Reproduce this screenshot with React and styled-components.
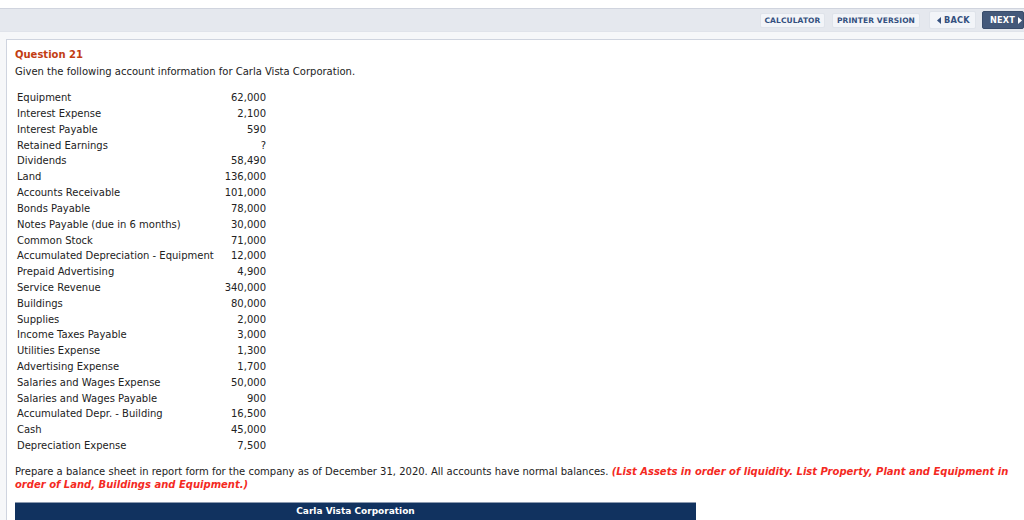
import React from "react";
import styled, { createGlobalStyle } from "styled-components";

const GlobalStyle = createGlobalStyle`
  html, body {
    margin: 0;
    padding: 0;
    background: #fff;
    overflow: hidden;
  }
  body {
    font-family: "DejaVu Sans", Verdana, sans-serif;
    font-size: 10px;
    color: #222;
  }
`;

const accounts = [
  ["Equipment", "62,000"],
  ["Interest Expense", "2,100"],
  ["Interest Payable", "590"],
  ["Retained Earnings", "?"],
  ["Dividends", "58,490"],
  ["Land", "136,000"],
  ["Accounts Receivable", "101,000"],
  ["Bonds Payable", "78,000"],
  ["Notes Payable (due in 6 months)", "30,000"],
  ["Common Stock", "71,000"],
  ["Accumulated Depreciation - Equipment", "12,000"],
  ["Prepaid Advertising", "4,900"],
  ["Service Revenue", "340,000"],
  ["Buildings", "80,000"],
  ["Supplies", "2,000"],
  ["Income Taxes Payable", "3,000"],
  ["Utilities Expense", "1,300"],
  ["Advertising Expense", "1,700"],
  ["Salaries and Wages Expense", "50,000"],
  ["Salaries and Wages Payable", "900"],
  ["Accumulated Depr. - Building", "16,500"],
  ["Cash", "45,000"],
  ["Depreciation Expense", "7,500"],
];

const Page = styled.div`
  width: 1024px;
  height: 520px;
  padding-top: 8px;
  box-sizing: border-box;
  overflow: hidden;
`;

const Toolbar = styled.div`
  box-sizing: border-box;
  height: 24px;
  display: flex;
  align-items: center;
  justify-content: flex-end;
  background: #e5e8ee;
  border-top: 1px solid #d0d4de;
  border-bottom: 1px solid #e0e3ea;
`;

const ToolButton = styled.div`
  box-sizing: border-box;
  width: ${(p) => p.$width}px;
  height: 15px;
  margin-right: 7px;
  display: flex;
  align-items: center;
  justify-content: center;
  font-size: 7.5px;
  font-weight: 700;
  letter-spacing: 0.1px;
  color: #34507f;
  background: #f2f4f8;
  border: 1px solid #dfe3ea;
  border-radius: 2px;
`;

const NavButton = styled.div`
  box-sizing: border-box;
  width: ${(p) => p.$width}px;
  height: 18px;
  margin-left: ${(p) => (p.$primary ? 6 : 2)}px;
  padding-left: 7px;
  display: flex;
  align-items: center;
  gap: 3px;
  font-size: 8.2px;
  font-weight: 700;
  letter-spacing: 0.2px;
  color: ${(p) => (p.$primary ? "#fff" : "#34507f")};
  background: ${(p) => (p.$primary ? "#44597a" : "#f2f4f8")};
  border: 1px solid ${(p) => (p.$primary ? "#3a4d6b" : "#dfe3ea")};
  border-radius: 2px;
`;

const Shell = styled.div`
  background: #f6f7f9;
  padding: 7px 0 0 6px;
  height: 100%;
`;

const Panel = styled.div`
  background: #fff;
  border-top: 1px solid #cfd4df;
  border-left: 1px solid #cfd4df;
  padding: 8px 16px 0 8px;
  height: 100%;
`;

const Title = styled.div`
  color: #c23d12;
  font-weight: 700;
  line-height: 13px;
`;

const Intro = styled.p`
  margin: 4px 0 12.2px;
  line-height: 13px;
`;

const AccountTable = styled.div`
  display: grid;
  grid-template-columns: 200px 49px;
  margin-left: 2px;
  width: 249px;
`;

const Cell = styled.div`
  height: 15.82px;
  line-height: 15.82px;
  white-space: nowrap;
  text-align: ${(p) => (p.$num ? "right" : "left")};
`;

const Instructions = styled.p`
  margin: 10.8px 0 0;
  line-height: 13px;
  width: 1000px;
`;

const Note = styled.em`
  color: #f42a1f;
  font-weight: 700;
`;

const SheetHead = styled.div`
  width: 681px;
  margin-top: 11px;
  padding-top: 2px;
  background: #11325f;
  border-top: 1px solid #8c9ab0;
  color: #fff;
  font-size: 9px;
  font-weight: 700;
  text-align: center;
  line-height: 13px;
`;

const Arrow = ({ left }) => (
  <svg width="4" height="7" viewBox="0 0 4 7" fill="currentColor">
    <path d={left ? "M4 0V7L0 3.5Z" : "M0 0V7L4 3.5Z"} />
  </svg>
);

export default function App() {
  return (
    <Page>
      <GlobalStyle />
      <Toolbar>
        <ToolButton $width={65}>CALCULATOR</ToolButton>
        <ToolButton $width={88}>PRINTER VERSION</ToolButton>
        <NavButton $width={47}>
          <Arrow left />
          BACK
        </NavButton>
        <NavButton $width={42} $primary>
          NEXT
          <Arrow />
        </NavButton>
      </Toolbar>
      <Shell>
        <Panel>
          <Title>Question 21</Title>
          <Intro>Given the following account information for Carla Vista Corporation.</Intro>
          <AccountTable>
            {accounts.map(([name, value]) => (
              <React.Fragment key={name}>
                <Cell>{name}</Cell>
                <Cell $num>{value}</Cell>
              </React.Fragment>
            ))}
          </AccountTable>
          <Instructions>
            Prepare a balance sheet in report form for the company as of December 31, 2020. All
            accounts have normal balances.{" "}
            <Note>
              (List Assets in order of liquidity. List Property, Plant and Equipment in order of
              Land, Buildings and Equipment.)
            </Note>
          </Instructions>
          <SheetHead>
            Carla Vista Corporation
            <br />
            Balance Sheet
          </SheetHead>
        </Panel>
      </Shell>
    </Page>
  );
}
